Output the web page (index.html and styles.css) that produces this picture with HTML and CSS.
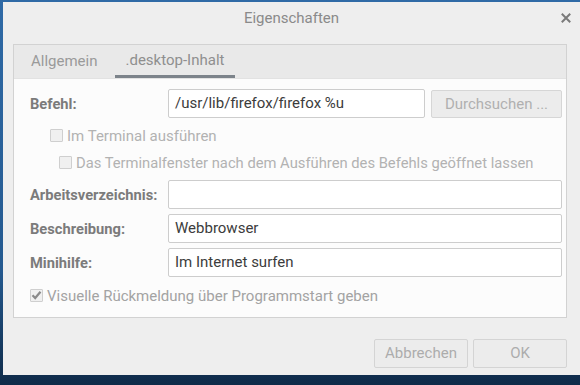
FILE: index.html
```html
<!DOCTYPE html>
<html lang="de">
<head>
<meta charset="utf-8">
<link rel="stylesheet" href="styles.css">
</head>
<body>
<div class="window">
  <div class="titlebar">
    <span class="title">Eigenschaften</span>
    <span class="close">
      <svg width="10" height="10" viewBox="0 0 10 10"><path d="M1.5 1.5 L8.5 8.5 M8.5 1.5 L1.5 8.5" stroke="#7a7a7a" stroke-width="2" stroke-linecap="square"/></svg>
    </span>
  </div>
  <div class="notebook">
    <div class="tabs">
      <div class="tab">Allgemein</div>
      <div class="tab active">.desktop-Inhalt</div>
    </div>
    <div class="page">
      <div class="row">
        <div class="label">Befehl:</div>
        <div class="entry grow">/usr/lib/firefox/firefox %u</div>
        <div class="browse">Durchsuchen ...</div>
      </div>
      <div class="check c1"><span class="box"></span><span>Im Terminal ausführen</span></div>
      <div class="check c2"><span class="box"></span><span>Das Terminalfenster nach dem Ausführen des Befehls geöffnet lassen</span></div>
      <div class="row r-a">
        <div class="label">Arbeitsverzeichnis:</div>
        <div class="entry grow"></div>
      </div>
      <div class="row r-b">
        <div class="label">Beschreibung:</div>
        <div class="entry grow">Webbrowser</div>
      </div>
      <div class="row r-b">
        <div class="label">Minihilfe:</div>
        <div class="entry grow">Im Internet surfen</div>
      </div>
      <div class="check c3"><span class="box checked"><svg width="11" height="10" viewBox="0 0 11 10"><path d="M1.5 5.2 L4.2 8 L9.5 1.8" fill="none" stroke="#8a8a8a" stroke-width="2.2"/></svg></span><span>Visuelle Rückmeldung über Programmstart geben</span></div>
    </div>
  </div>
  <div class="buttons">
    <div class="btn cancel">Abbrechen</div>
    <div class="btn ok">OK</div>
  </div>
</div>
</body>
</html>
```
FILE: styles.css
```css
html, body {
  margin: 0;
  padding: 0;
}
body {
  width: 580px;
  height: 385px;
  overflow: hidden;
  background: linear-gradient(180deg, #2f6aa6 0%, #24598f 70%, #0e2a48 100%);
  font-family: Roboto, "Noto Sans", sans-serif;
  font-size: 15px;
}
.window {
  margin: 2px 0 0 3px;
  width: 577px;
  height: 373px;
  background: #eeeeee;
  box-sizing: border-box;
  display: flex;
  flex-direction: column;
}
.titlebar {
  height: 42px;
  position: relative;
  display: flex;
  justify-content: center;
  align-items: flex-start;
}
.title {
  margin-top: 6px;
  color: #8a8a8a;
  line-height: 20px;
}
.close {
  position: absolute;
  right: 9px;
  top: 11px;
  width: 10px;
  height: 10px;
  display: flex;
}
.notebook {
  margin: 0 13px 0 10px;
  border: 1px solid #d2d2d2;
  display: flex;
  flex-direction: column;
}
.tabs {
  height: 33px;
  background: #e9e9e9;
  display: flex;
  padding-left: 6px;
  border-bottom: 1px solid #e2e2e2;
}
.tab {
  padding: 0 11px;
  margin-right: 6px;
  line-height: 32px;
  color: #9a9a9a;
}
.tab.active {
  color: #8f8f8f;
  border-bottom: 3px solid #7c838a;
  line-height: 30px;
  height: 30px;
}
.page {
  background: #fcfcfc;
  padding: 10px 4px 11px 16px;
  display: flex;
  flex-direction: column;
}
.row {
  display: flex;
  align-items: center;
  height: 29px;
}
.r-a { margin-top: 7px; }
.r-b { margin-top: 5px; }
.label {
  width: 138px;
  flex: none;
  font-weight: bold;
  font-size: 14.7px;
  color: #7b7b7b;
}
.entry {
  height: 29px;
  box-sizing: border-box;
  border: 1px solid #cdcdcd;
  border-radius: 2px;
  background: #ffffff;
  padding: 0 6px;
  line-height: 27px;
  color: #3c3c3c;
}
.grow { flex: 1; }
.browse {
  margin-left: 6px;
  width: 131px;
  height: 28px;
  box-sizing: border-box;
  border: 1px solid #d6d6d6;
  border-radius: 2px;
  background: #ececec;
  color: #b0b0b0;
  text-align: center;
  line-height: 26px;
  flex: none;
}
.check {
  display: flex;
  align-items: center;
  height: 21px;
  color: #b2b2b2;
}
.c1 { margin-top: 7px; padding-left: 20px; }
.c2 { margin-top: 6px; padding-left: 29px; font-size: 14.75px; }
.c3 { margin-top: 8px; padding-left: 0; color: #a3a3a3; }
.box {
  width: 13px;
  height: 13px;
  box-sizing: border-box;
  border: 1px solid #cfcfcf;
  background: #f0f0f0;
  border-radius: 1px;
  margin-right: 4px;
  display: flex;
  align-items: center;
  justify-content: center;
  flex: none;
}
.box.checked svg { margin-top: -1px; }
.buttons {
  display: flex;
  justify-content: flex-end;
  padding: 21px 13px 0 0;
  gap: 5px;
}
.btn {
  height: 29px;
  box-sizing: border-box;
  border: 1px solid #d4d4d4;
  border-radius: 2px;
  background: #ececec;
  color: #acacac;
  text-align: center;
  line-height: 27px;
}
.cancel { width: 94px; }
.ok { width: 94px; }
```
